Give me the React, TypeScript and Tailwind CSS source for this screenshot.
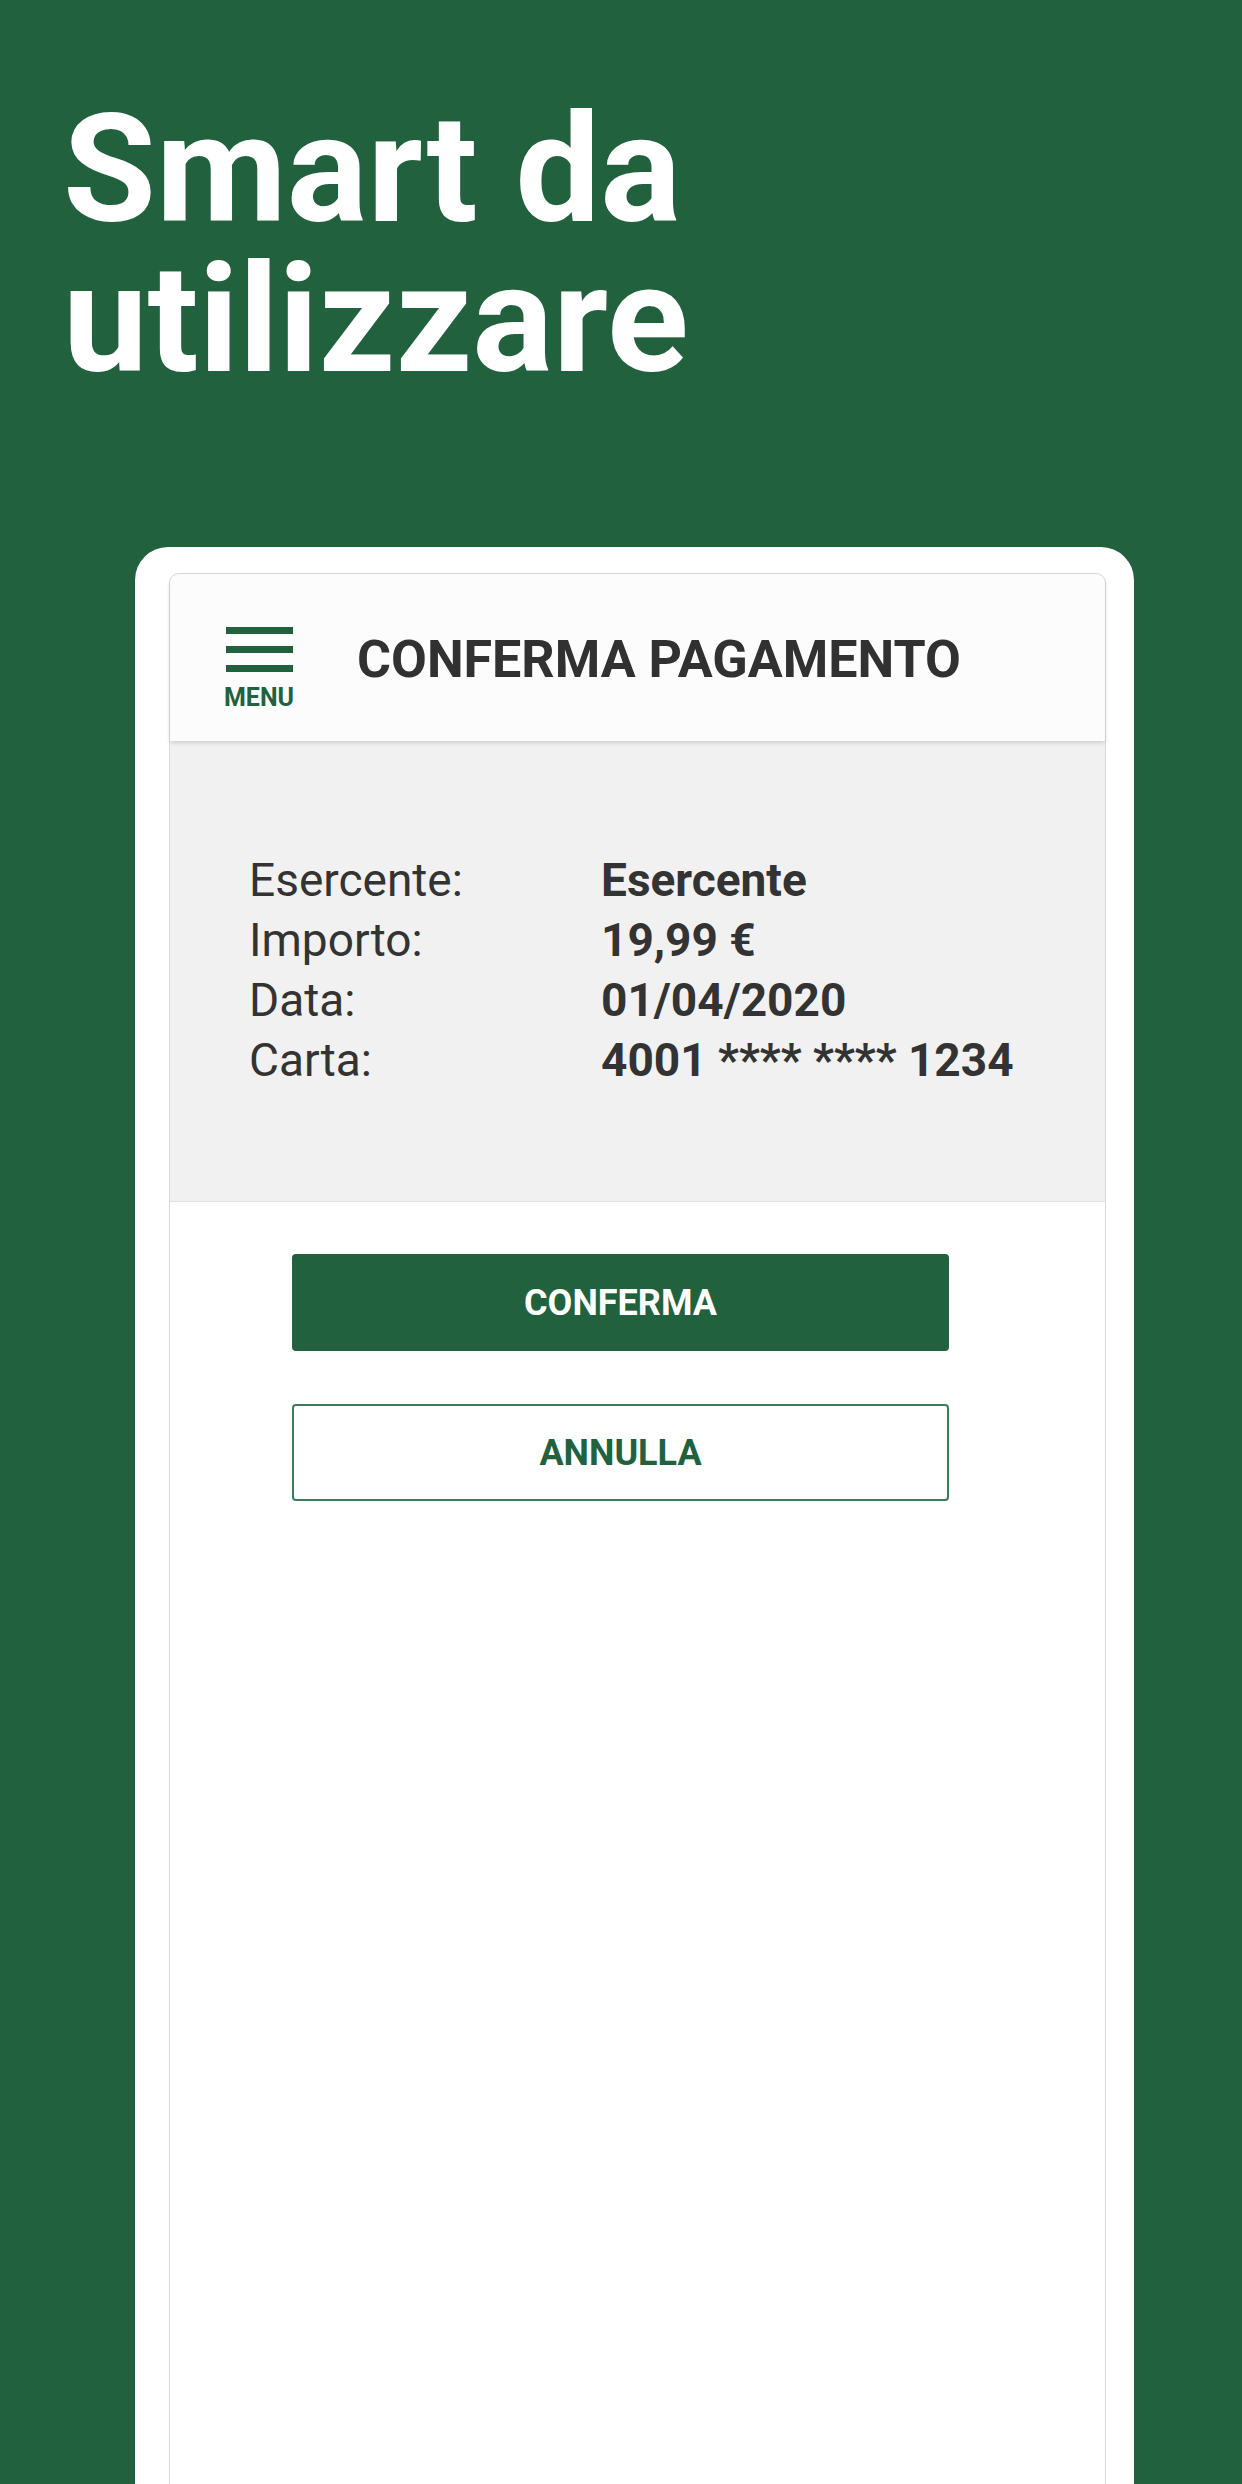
export default function App() {
  const rows = [
    { label: "Esercente:", value: "Esercente" },
    { label: "Importo:", value: "19,99 €" },
    { label: "Data:", value: "01/04/2020" },
    { label: "Carta:", value: "4001 **** **** 1234" },
  ];

  return (
    <div
      className="h-[2484px] w-[1242px] overflow-hidden bg-[#21613e]"
      style={{ fontFamily: "Roboto, 'Noto Sans', sans-serif" }}
    >
      {/* headline */}
      <h1 className="pl-[63px] pt-[95px] text-[151px] font-bold leading-[150px] text-white">
        Smart da
        <br />
        utilizzare
      </h1>

      {/* phone frame */}
      <div className="ml-[135px] mt-[152px] h-[1960px] w-[999px] rounded-t-[33px] bg-white pl-[34px] pr-[28px] pt-[26px]">
        <div className="h-full rounded-t-[10px] border border-[#d9d9d9] bg-white">
          {/* app bar */}
          <div className="relative z-10 flex h-[167px] items-start rounded-t-[10px] bg-[#fcfcfc] pl-[54px] pt-[53px] shadow-[0_2px_4px_rgba(0,0,0,0.14)]">
            <div className="flex w-[70px] flex-col items-center">
              <div className="flex flex-col gap-[12px]">
                <div className="h-[7px] w-[67px] bg-[#21613e]" />
                <div className="h-[7px] w-[67px] bg-[#21613e]" />
                <div className="h-[7px] w-[67px] bg-[#21613e]" />
              </div>
              <span className="mt-[13px] text-[25px] font-bold leading-[25px] text-[#21613e]">MENU</span>
            </div>
            <h2 className="ml-[63px] mt-[3px] text-[52px] font-bold leading-[60px] text-[#313131]">
              CONFERMA PAGAMENTO
            </h2>
          </div>

          {/* summary */}
          <div className="border-b border-[#e2e2e2] bg-[#f1f1f1] pb-[111px] pl-[79px] pt-[109px]">
            {rows.map((r) => (
              <div key={r.label} className="flex text-[46px] leading-[60px] text-[#333333]">
                <span className="w-[352px] shrink-0">{r.label}</span>
                <span className="font-bold">{r.value}</span>
              </div>
            ))}
          </div>

          {/* actions */}
          <div className="flex flex-col gap-[53px] pl-[122px] pt-[52px]">
            <button className="h-[97px] w-[657px] rounded-[4px] bg-[#21613e] text-[36px] font-bold text-white">
              CONFERMA
            </button>
            <button className="h-[97px] w-[657px] rounded-[4px] border-2 border-[#3f7a5a] bg-white text-[36px] font-bold text-[#21613e]">
              ANNULLA
            </button>
          </div>
        </div>
      </div>
    </div>
  );
}
